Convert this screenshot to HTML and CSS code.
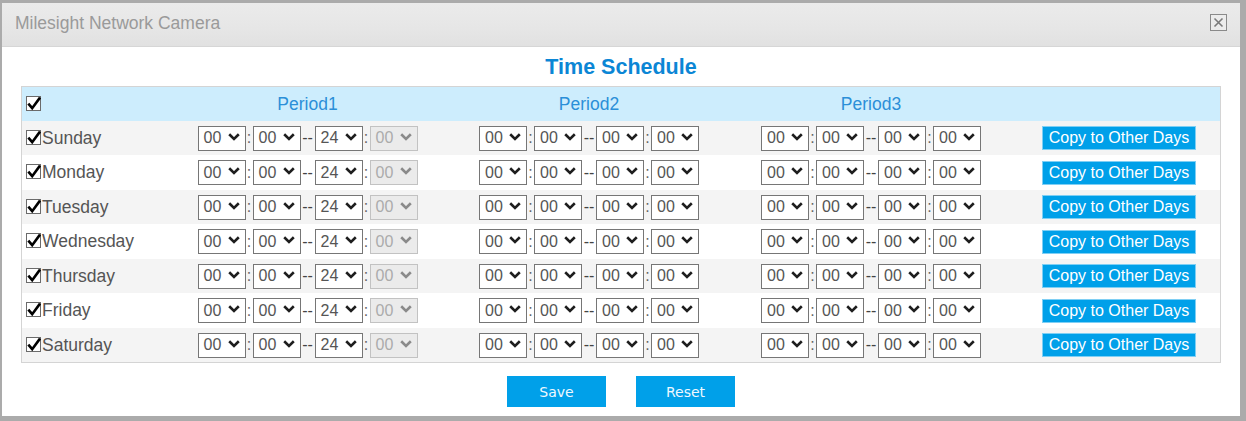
FILE: index.html
```html
<!DOCTYPE html>
<html lang="en">
<head>
<meta charset="utf-8">
<title>Milesight Network Camera</title>
<link rel="stylesheet" href="styles.css">
</head>
<body>
<div class="dialog">
  <div class="titlebar">
    <span class="title">Milesight Network Camera</span>
    <span class="close"><svg width="17" height="17" viewBox="0 0 17 17"><rect x="0.5" y="0.5" width="16" height="16" fill="#ececec" stroke="#8a8a8a"/><path d="M4.5 4.5 L12.5 12.5 M12.5 4.5 L4.5 12.5" stroke="#7a7a7a" stroke-width="1.6" fill="none"/></svg></span>
  </div>
  <div class="content">
    <h1 class="heading">Time Schedule</h1>
    <div class="sched" id="sched">
      <div class="row head">
        <div class="day"><span class="cb"><svg width="15" height="15" viewBox="0 0 15 15"><rect x="0.5" y="0.5" width="14" height="14" fill="#fff" stroke="#6b6b6b"/><path d="M2.3 7.6 L6.2 12.2 L14 1.6" stroke="#000" stroke-width="2.6" fill="none"/></svg></span></div>
        <div class="cell plabel">Period1</div>
        <div class="cell plabel">Period2</div>
        <div class="cell plabel">Period3</div>
        <div class="cell copy"></div>
      </div>
    </div>
    <div class="actions">
      <button class="btn">Save</button>
      <button class="btn">Reset</button>
    </div>
  </div>
</div>
<script src="app.js"></script>
</body>
</html>
```
FILE: app.js
```js
(function () {
  var days = ["Sunday", "Monday", "Tuesday", "Wednesday", "Thursday", "Friday", "Saturday"];
  var chev = '<svg class="chev" width="12" height="8" viewBox="0 0 12 8"><path d="M1.2 1.3 L6 6 L10.8 1.3" fill="none" stroke-width="2.6"/></svg>';
  var cb = '<span class="cb"><svg width="15" height="15" viewBox="0 0 15 15"><rect x="0.5" y="0.5" width="14" height="14" fill="#fff" stroke="#6b6b6b"/><path d="M2.3 7.6 L6.2 12.2 L14 1.6" stroke="#000" stroke-width="2.6" fill="none"/></svg></span>';
  function sel(v, dis) {
    return '<span class="sel' + (dis ? ' dis' : '') + '"><span class="val">' + v + '</span>' + chev + '</span>';
  }
  function group(first) {
    return '<div class="cell"><div class="grp">' +
      sel("00") + '<span class="colon">:</span>' + sel("00") +
      '<span class="dash">--</span>' +
      (first ? sel("24") : sel("00")) + '<span class="colon">:</span>' + sel("00", first) +
      '</div></div>';
  }
  var html = "";
  days.forEach(function (d, i) {
    html += '<div class="row ' + (i % 2 === 0 ? 'odd' : 'even') + '">' +
      '<div class="day">' + cb + '<span class="dname">' + d + '</span></div>' +
      group(true) + group(false) + group(false) +
      '<div class="cell copy"><button class="copybtn">Copy to Other Days</button></div>' +
      '</div>';
  });
  document.getElementById("sched").insertAdjacentHTML("beforeend", html);
})();
```
FILE: styles.css
```css
* { box-sizing: border-box; }
html, body { height: 100%; }
body {
  margin: 0;
  background: #ababab;
  padding: 3px 6px 5px 2px;
  font-family: "Liberation Sans", Arial, sans-serif;
}
.dialog {
  background: #fff;
  height: 413px;
  display: flex;
  flex-direction: column;
}
.titlebar {
  height: 44px;
  background: linear-gradient(#ebebeb, #e6e6e6 60%, #e1e1e1);
  border-bottom: 1px solid #d6d6d6;
  display: flex;
  align-items: center;
  justify-content: space-between;
  padding: 0 13px 0 13px;
}
.title {
  font-size: 17.5px;
  color: #9a9a9a;
  margin-top: -3px;
}
.close { display: flex; margin-top: -5px; }
.content {
  padding: 8px 19px 0 19px;
}
.heading {
  margin: 0 0 7px 0;
  font-size: 21.5px;
  line-height: 24px;
  font-weight: bold;
  text-align: center;
  color: #0b86d5;
}
.sched {
  border: 1px solid #d4d4d4;
}
.row {
  display: grid;
  grid-template-columns: 145px 281px 282px 282px 1fr;
  align-items: center;
  height: 34px;
}
.row.even { height: 35px; }
.row.head { background: #cdedfd; height: 34px; }
.row.odd { background: #f4f4f4; }
.row.even { background: #fff; }
.day {
  display: flex;
  align-items: center;
  padding-left: 4px;
  height: 100%;
}
.cb { display: flex; margin-top: -2px; }
.dname {
  font-size: 17.5px;
  color: #555;
  margin-left: 1px;
}
.cell {
  display: flex;
  justify-content: center;
  align-items: center;
}
.plabel {
  font-size: 17.5px;
  color: #2b8fd8;
}
.grp {
  display: flex;
  align-items: center;
}
.sel {
  width: 48px;
  height: 25px;
  border: 1px solid #767676;
  background: #fff;
  display: flex;
  align-items: center;
  justify-content: space-between;
  padding: 0 5px 0 5px;
  font-size: 16px;
  color: #555;
}
.sel .chev { stroke: #1e1e1e; margin-top: -3px; }
.sel.dis {
  background: #ebebeb;
  border-color: #c2c2c2;
  color: #ababab;
}
.sel.dis .chev { stroke: #8a8a8a; }
.colon {
  width: 7px;
  text-align: center;
  font-size: 16px;
  color: #666;
}
.dash {
  width: 14px;
  text-align: center;
  font-size: 16px;
  color: #444;
}
.copy { padding-left: 6px; }
.copybtn {
  width: 154px;
  height: 24px;
  padding: 0;
  border: 1px solid #7fcff4;
  background: #00a0e9;
  color: #fff;
  font-family: "Liberation Sans", Arial, sans-serif;
  font-size: 16px;
  line-height: 22px;
}
.actions {
  display: flex;
  justify-content: center;
  gap: 30px;
  margin-top: 13px;
}
.btn {
  width: 99px;
  height: 31px;
  border: 0;
  padding: 0;
  background: #00a0e9;
  color: #eef8ff;
  font-family: "DejaVu Sans", Verdana, sans-serif;
  font-size: 14px;
}
```
